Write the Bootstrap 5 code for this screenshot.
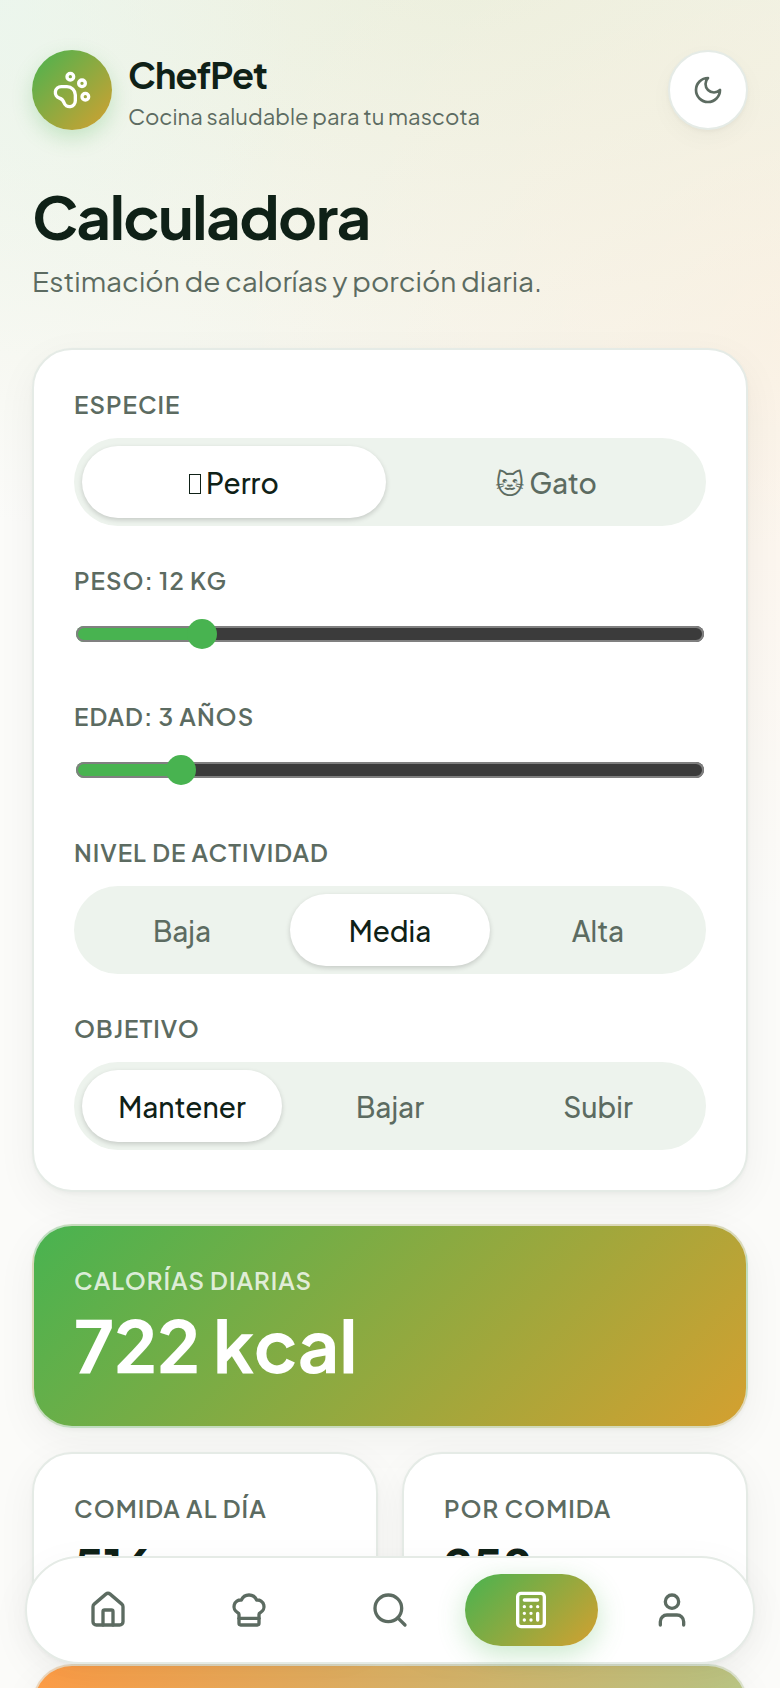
<!DOCTYPE html>
<html lang="es">
<head>
<meta charset="utf-8">
<meta name="viewport" content="width=device-width, initial-scale=1">
<title>ChefPet · Calculadora</title>
<link href="https://cdn.jsdelivr.net/npm/bootstrap@5.3.0/dist/css/bootstrap.min.css" rel="stylesheet">
<style>
:root {
  --ink: #0f2117;
  --ink-soft: #5c6b61;
  --line: #e5ebe6;
  --green: #48b350;
  --gold: #d4a030;
  --brand: linear-gradient(135deg, var(--green), var(--gold));
  --lift: 0 2px 4px rgba(20, 35, 25, .04), 0 12px 40px rgba(20, 35, 25, .05);
}
body {
  font-family: "Plus Jakarta Sans", Inter, "DejaVu Sans", sans-serif;
  color: var(--ink);
  min-height: 100vh;
  background:
    radial-gradient(300px 360px at 0 0, rgba(232, 247, 240, .6), transparent),
    radial-gradient(640px 560px at 105% 350px, rgba(255, 232, 210, .42), transparent),
    radial-gradient(1300px 580px at 60% -20px, rgba(233, 238, 218, .85), transparent);
  background-color: #fbfbf9;
  background-repeat: no-repeat;
}
.page { padding: 50px 32px 160px; }
svg { fill: none; stroke: currentColor; stroke-width: 2; stroke-linecap: round; stroke-linejoin: round; display: block; }
.logo, .round-btn { width: 80px; height: 80px; border-radius: 50%; }
.logo { background: var(--brand); color: #fff; box-shadow: 0 8px 20px rgba(72, 179, 80, .25); }
.logo svg, .tabs svg { width: 40px; height: 40px; }
.round-btn { background: #fff; border: 2px solid var(--line); color: var(--ink-soft); box-shadow: 0 2px 4px rgba(20, 35, 25, .04), 0 8px 24px rgba(20, 35, 25, .03); }
.round-btn svg { width: 32px; height: 32px; }
.site-head { height: 80px; }
.brand-name { font-size: 36px; line-height: 48px; font-weight: 700; letter-spacing: -.025em; padding-top: 4px; }
.brand-tag { font-size: 22px; line-height: 34px; color: var(--ink-soft); }
.title { font-size: 60px; line-height: 76px; font-weight: 700; letter-spacing: -.025em; margin: 48px 0 8px; }
.lede { font-size: 28px; line-height: 38px; color: var(--ink-soft); margin-bottom: 48px; }
.panel { background: #fff; border: 2px solid var(--line); border-radius: 40px; padding: 40px; box-shadow: var(--lift); }
.panel-form { gap: 40px; margin-bottom: 32px; }
.panel-brand { background: var(--brand); color: #fff; border-color: rgba(229, 235, 230, .75); }
.panel-warm { background: linear-gradient(135deg, #ff9c45, #a9cf93); height: 200px; border-color: rgba(229, 235, 230, .75); }
.caption { display: block; font-size: 24px; line-height: 28px; font-weight: 600; letter-spacing: 1px; color: var(--ink-soft); margin: 0 0 20px; text-transform: uppercase; }
.panel-brand .caption { color: rgba(255, 255, 255, .8); margin-bottom: 8px; }
.kcal { font-size: 72px; line-height: 84px; font-weight: 700; }
.panel-stat .caption { margin-bottom: 12px; }
.amount { font-size: 48px; line-height: 64px; font-weight: 700; }
.segment { background: #edf3ed; border-radius: 44px; padding: 8px; }
.segment button { height: 72px; flex: 1 1 0; border: 0; border-radius: 36px; background: none; font-size: 28px; font-weight: 500; color: var(--ink-soft); padding: 2px 0 0; }
.segment button.on { background: #fff; color: var(--ink); box-shadow: 0 2px 5px rgba(0, 0, 0, .17); }
.glyph-box { display: inline-block; width: 12px; height: 20px; border: 1px solid currentColor; }
.slider { appearance: none; -webkit-appearance: none; display: block; width: calc(100% - 4px); height: 40px; margin: 0 2px 8px; background: none; }
.slider::-webkit-slider-runnable-track {
  height: 16px; border-radius: 8px; box-shadow: inset 0 0 0 2px #808080;
  background: linear-gradient(90deg, #48b350 var(--at), #3b3b3b var(--at));
}
.slider::-webkit-slider-thumb { -webkit-appearance: none; width: 30px; height: 30px; margin-top: -7px; border: 0; border-radius: 50%; background: #48b350; }
.tabs { position: fixed; left: 25px; right: 25px; bottom: 24px; z-index: 10; background: #fff; border: 2px solid var(--line); border-radius: 54px; padding: 16px 14px; box-shadow: var(--lift); }
.tabs a { flex: 1 1 0; height: 72px; border-radius: 36px; color: var(--ink-soft); }
.tabs a.on { background: var(--brand); color: #fff; box-shadow: 0 8px 28px rgba(72, 179, 80, .3); }
</style>
</head>
<body>
<div class="page container-fluid">
  <header class="site-head d-flex align-items-center gap-3">
    <div class="logo d-flex align-items-center justify-content-center">
      <svg viewBox="0 0 24 24"><circle cx="11" cy="4" r="2"/><circle cx="18" cy="8" r="2"/><circle cx="20" cy="16" r="2"/><path d="M9 10a5 5 0 0 1 5 5v3.5a3.5 3.5 0 0 1-6.84 1.045Q6.52 17.48 4.46 16.84A3.5 3.5 0 0 1 5.5 10Z"/></svg>
    </div>
    <div class="flex-grow-1">
      <div class="brand-name">ChefPet</div>
      <div class="brand-tag">Cocina saludable para tu mascota</div>
    </div>
    <button type="button" class="round-btn d-flex align-items-center justify-content-center p-0" aria-label="Modo oscuro">
      <svg viewBox="0 0 24 24"><path d="M12 3a6 6 0 0 0 9 9 9 9 0 1 1-9-9Z"/></svg>
    </button>
  </header>

  <main>
    <h1 class="title">Calculadora</h1>
    <p class="lede">Estimación de calorías y porción diaria.</p>

    <section class="panel panel-form d-flex flex-column">
      <div>
        <span class="caption" id="c-especie">Especie</span>
        <div class="segment d-flex gap-2" role="group" aria-labelledby="c-especie">
          <button type="button" class="on"><span class="glyph-box"></span> Perro</button>
          <button type="button">🐱 Gato</button>
        </div>
      </div>
      <div>
        <label class="caption" for="peso">Peso: 12 kg</label>
        <input class="slider" id="peso" type="range" min="1" max="60" value="12" style="--at:20%">
      </div>
      <div>
        <label class="caption" for="edad">Edad: 3 años</label>
        <input class="slider" id="edad" type="range" min="0" max="20" value="3" style="--at:17%">
      </div>
      <div>
        <span class="caption" id="c-nivel">Nivel de actividad</span>
        <div class="segment d-flex gap-2" role="group" aria-labelledby="c-nivel">
          <button type="button">Baja</button>
          <button type="button" class="on">Media</button>
          <button type="button">Alta</button>
        </div>
      </div>
      <div>
        <span class="caption" id="c-objetivo">Objetivo</span>
        <div class="segment d-flex gap-2" role="group" aria-labelledby="c-objetivo">
          <button type="button" class="on">Mantener</button>
          <button type="button">Bajar</button>
          <button type="button">Subir</button>
        </div>
      </div>
    </section>

    <section class="panel panel-brand mb-4">
      <div class="caption">Calorías diarias</div>
      <div class="kcal">722 kcal</div>
    </section>

    <div class="row g-4 mb-4">
      <div class="col-6"><section class="panel panel-stat">
        <div class="caption">Comida al día</div>
        <div class="amount">516 g</div>
      </section></div>
      <div class="col-6"><section class="panel panel-stat">
        <div class="caption">Por comida</div>
        <div class="amount">258 g</div>
      </section></div>
    </div>

    <section class="panel panel-warm"></section>
  </main>
</div>

<nav class="tabs d-flex gap-2" aria-label="Principal">
  <a href="#inicio" class="d-flex align-items-center justify-content-center" aria-label="Inicio"><svg viewBox="0 0 24 24"><path d="M15 21v-8a1 1 0 0 0-1-1h-4a1 1 0 0 0-1 1v8"/><path d="M3 10a2 2 0 0 1 .709-1.528l7-5.999a2 2 0 0 1 2.582 0l7 5.999A2 2 0 0 1 21 10v9a2 2 0 0 1-2 2H5a2 2 0 0 1-2-2z"/></svg></a>
  <a href="#recetas" class="d-flex align-items-center justify-content-center" aria-label="Recetas"><svg viewBox="0 0 24 24"><path d="M17 21a1 1 0 0 0 1-1v-5.35c0-.457.316-.844.727-1.041a4 4 0 0 0-2.134-7.589 5 5 0 0 0-9.186 0 4 4 0 0 0-2.134 7.588c.411.198.727.585.727 1.041V20a1 1 0 0 0 1 1Z"/><path d="M6 17h12"/></svg></a>
  <a href="#buscar" class="d-flex align-items-center justify-content-center" aria-label="Buscar"><svg viewBox="0 0 24 24"><circle cx="11" cy="11" r="8"/><path d="m21 21-4.3-4.3"/></svg></a>
  <a href="#calculadora" class="on d-flex align-items-center justify-content-center" aria-label="Calculadora" aria-current="page"><svg viewBox="0 0 24 24"><rect width="16" height="20" x="4" y="2" rx="2"/><path d="M8 6h8M16 14v4M16 10h.01M12 10h.01M8 10h.01M12 14h.01M8 14h.01M12 18h.01M8 18h.01"/></svg></a>
  <a href="#perfil" class="d-flex align-items-center justify-content-center" aria-label="Perfil"><svg viewBox="0 0 24 24"><path d="M19 21v-2a4 4 0 0 0-4-4H9a4 4 0 0 0-4 4v2"/><circle cx="12" cy="7" r="4"/></svg></a>
</nav>
<script src="https://cdn.jsdelivr.net/npm/bootstrap@5.3.0/dist/js/bootstrap.bundle.min.js"></script>
</body>
</html>
